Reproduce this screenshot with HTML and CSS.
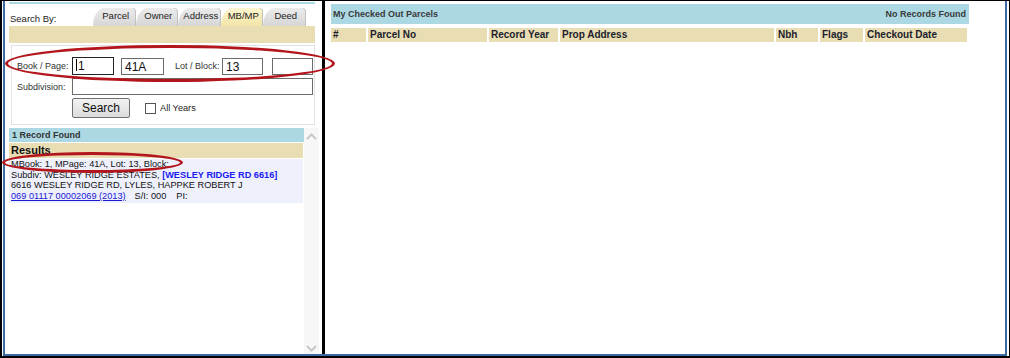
FILE: index.html
```html
<!DOCTYPE html>
<html lang="en">
<head>
    <meta charset="UTF-8">
    <title>Parcel Search</title>
    <link rel="stylesheet" href="styles.css">
</head>
<body>
    <div class="frame">
        <div class="inner">
            <!-- left: search panel -->
            <div class="left">
                <div class="topline"></div>
                <div class="search-head">
                    <span class="search-by">Search By:</span>
                    <div class="tabs">
                        <span class="tab">Parcel</span>
                        <span class="tab">Owner</span>
                        <span class="tab">Address</span>
                        <span class="tab active">MB/MP</span>
                        <span class="tab">Deed</span>
                    </div>
                </div>
                <div class="tab-strip"></div>

                <div class="form-box">
                    <div class="row">
                        <span class="label">Book / Page:</span>
                        <span class="field f-book focus"><span class="caret"></span>1</span>
                        <span class="field f-page">41A</span>
                        <span class="label lot">Lot / Block:</span>
                        <span class="field f-lot">13</span>
                        <span class="field f-block"></span>
                    </div>
                    <div class="row">
                        <span class="label">Subdivision:</span>
                        <span class="field f-subdiv"></span>
                    </div>
                    <div class="row buttons">
                        <button class="btn">Search</button>
                        <label class="check"><span class="box"></span>All Years</label>
                    </div>
                </div>

                <div class="results-wrap">
                    <div class="results">
                        <div class="found">1 Record Found</div>
                        <div class="results-title">Results</div>
                        <div class="record">
                            <div>MBook: 1, MPage: 41A, Lot: 13, Block:</div>
                            <div>Subdiv: WESLEY RIDGE ESTATES, <span class="addr">[WESLEY RIDGE RD 6616]</span></div>
                            <div>6616 WESLEY RIDGE RD, LYLES, HAPPKE ROBERT J</div>
                            <div><a href="#" class="parcel-link">069 01117 00002069 (2013)</a><span class="si">S/I: 000</span><span class="pi">PI:</span></div>
                        </div>
                    </div>
                    <div class="scrollbar">
                        <svg width="11" height="7" viewBox="0 0 11 7"><polyline points="1,6 5.5,1.5 10,6" fill="none" stroke="#c9c9c9" stroke-width="2"/></svg>
                        <svg width="11" height="7" viewBox="0 0 11 7"><polyline points="1,1 5.5,5.5 10,1" fill="none" stroke="#c9c9c9" stroke-width="2"/></svg>
                    </div>
                </div>

                <!-- annotation rings -->
                <div class="ring ring-book"></div>
                <div class="ring ring-result"></div>
            </div>

            <div class="divider"></div>

            <!-- right: checked out parcels -->
            <div class="right">
                <div class="co-head">
                    <span>My Checked Out Parcels</span>
                    <span>No Records Found</span>
                </div>
                <div class="co-cols">
                    <span class="c-num">#</span>
                    <span class="c-parcel">Parcel No</span>
                    <span class="c-year">Record Year</span>
                    <span class="c-addr">Prop Address</span>
                    <span class="c-nbh">Nbh</span>
                    <span class="c-flags">Flags</span>
                    <span class="c-date">Checkout Date</span>
                </div>
            </div>
        </div>
    </div>
</body>
</html>
```

FILE: styles.css
```css
body {
    margin: 0;
    font-family: 'Liberation Sans', Arial, sans-serif;
    background: white;
}

.frame {
    width: 1010px;
    height: 358px;
    box-sizing: border-box;
    border-top: 1px solid #000;
    border-left: 2px solid #000;
    border-right: 1px solid #000;
    border-bottom: 2px solid #000;
    padding: 0 2px 0 1px;
}

.inner {
    height: 100%;
    box-sizing: border-box;
    border: 2px solid #3c6aa3;
    border-top: none;
    display: flex;
}

/* left panel */
.left {
    position: relative;
    width: 317px;
    padding-left: 4px;
    box-sizing: border-box;
    display: flex;
    flex-direction: column;
}

.topline {
    margin-top: 1px;
    width: 306px;
    height: 2px;
    background-color: #acd8e4;
}

.search-head {
    display: flex;
    align-items: flex-end;
    height: 22px;
}

.search-by {
    font-size: 9.5px;
    color: #1a1a1a;
    width: 83px;
    padding-left: 1px;
    margin-bottom: 2px;
    white-space: nowrap;
}

.tabs {
    display: flex;
    align-items: flex-end;
}

.tab {
    width: 42.5px;
    height: 18px;
    line-height: 15px;
    font-size: 9.5px;
    color: #222;
    text-align: center;
    background: linear-gradient(#ebebeb, #d6d6d6);
    border-radius: 12px 4px 0 0 / 18px 4px 0 0;
    box-shadow: inset -1px 0 0 #c0c0c0;
    padding-left: 3px;
    box-sizing: border-box;
    white-space: nowrap;
}

.tab.active {
    background: linear-gradient(#fcf5cf, #f3e5a7);
}

.tab-strip {
    width: 306px;
    height: 17px;
    background-color: #e8ddb3;
}

.form-box {
    margin: 2px 0 0 2px;
    width: 304px;
    height: 80px;
    box-sizing: border-box;
    border: 1px solid #e2e2e2;
    padding: 11px 0 0 5px;
    font-size: 9px;
    color: #333;
}

.row {
    display: flex;
    align-items: center;
    margin-bottom: 3px;
}

.label {
    width: 55px;
    flex-shrink: 0;
    white-space: nowrap;
}

.label.lot {
    width: 47px;
    margin-left: 11px;
}

.field {
    display: inline-block;
    flex-shrink: 0;
    height: 17px;
    line-height: 17px;
    box-sizing: border-box;
    border: 1px solid #6b6b6b;
    font-size: 12px;
    color: #111;
    padding-left: 3px;
}

.field.focus {
    border-color: #222;
    height: 18px;
}

.caret {
    display: inline-block;
    width: 1px;
    height: 12px;
    background: #000;
    vertical-align: -1px;
    margin-right: 1px;
}

.f-book { width: 42px; }
.f-page { width: 43px; margin-left: 7px; }
.f-lot { width: 41px; }
.f-block { width: 41px; margin-left: 9px; }
.f-subdiv { width: 241px; }

.row.buttons {
    padding-left: 55px;
}

.btn {
    width: 58px;
    height: 20px;
    padding: 0;
    font-family: 'Liberation Sans', Arial, sans-serif;
    font-size: 12px;
    color: #111;
    border: 1px solid #707070;
    border-radius: 2px;
    background: linear-gradient(#f2f2f2, #dcdcdc);
}

.check {
    display: flex;
    align-items: center;
    margin-left: 15px;
    font-size: 9.2px;
    color: #222;
}

.check .box {
    width: 11px;
    height: 11px;
    box-sizing: border-box;
    border: 1px solid #555;
    margin-right: 4px;
}

/* results */
.results-wrap {
    margin-top: 3px;
    flex: 1;
    display: flex;
}

.results {
    width: 295px;
}

.found {
    height: 14px;
    line-height: 14px;
    background-color: #acd8e4;
    font-size: 9px;
    font-weight: bold;
    color: #333;
    padding-left: 3px;
}

.results-title {
    margin-top: 1px;
    width: 294px;
    height: 15px;
    line-height: 15px;
    background-color: #e8ddb3;
    font-size: 11px;
    font-weight: bold;
    color: #111;
    padding-left: 2px;
    box-sizing: border-box;
}

.record {
    margin-top: 1px;
    width: 294px;
    background-color: #eef0fc;
    font-size: 9.2px;
    line-height: 10.7px;
    color: #111;
    padding: 0 0 1px 2px;
    box-sizing: border-box;
    white-space: nowrap;
}

.addr {
    color: #1a1af0;
    font-weight: bold;
}

.parcel-link {
    color: #1a1ad6;
}

.si {
    margin-left: 9px;
}

.pi {
    margin-left: 10px;
}

.scrollbar {
    width: 15px;
    background-color: #f7f7f7;
    display: flex;
    flex-direction: column;
    justify-content: space-between;
    align-items: center;
    padding: 5px 0 2px;
    box-sizing: border-box;
}

/* hand-drawn annotation rings */
.ring {
    position: absolute;
    border: 3px solid #b3151c;
    border-radius: 50%;
    box-sizing: border-box;
    z-index: 2;
}

.ring-book {
    left: 0;
    top: 44px;
    width: 330px;
    height: 37px;
}

.ring-result {
    left: -3px;
    top: 151px;
    width: 181px;
    height: 21px;
}

.divider {
    width: 3px;
    background-color: #000;
}

/* right panel */
.right {
    flex: 1;
    padding: 3px 0 0 6px;
}

.co-head {
    width: 638px;
    height: 20px;
    box-sizing: border-box;
    background-color: #acd8e4;
    display: flex;
    justify-content: space-between;
    align-items: center;
    padding: 0 3px 0 2px;
    font-size: 9px;
    font-weight: bold;
    color: #3a3a3a;
}

.co-cols {
    margin-top: 4px;
    display: flex;
    gap: 2px;
    font-size: 10px;
    font-weight: bold;
    color: #1c1c2c;
}

.co-cols span {
    height: 14px;
    line-height: 14px;
    background-color: #e8ddb3;
    padding-left: 2px;
    box-sizing: border-box;
}

.c-num { width: 35px; }
.c-parcel { width: 119px; }
.c-year { width: 69px; }
.c-addr { width: 214px; }
.c-nbh { width: 42px; }
.c-flags { width: 43px; }
.c-date { width: 102px; }
```
